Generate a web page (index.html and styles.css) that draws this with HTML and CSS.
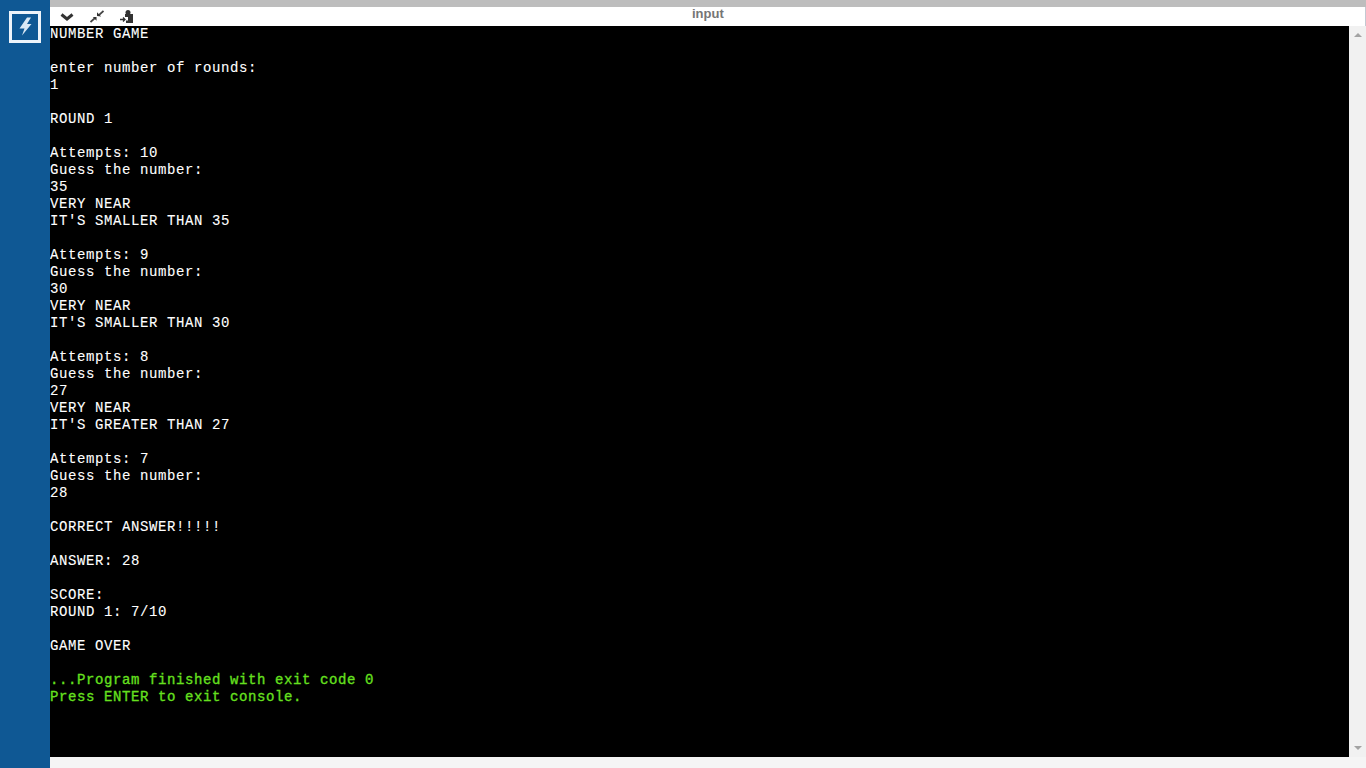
FILE: index.html
```html
<!DOCTYPE html>
<html lang="en">
<head>
<meta charset="utf-8">
<title>input</title>
<link rel="stylesheet" href="styles.css">
</head>
<body>
<aside class="rail">
  <div class="logo">
    <svg width="32" height="32" viewBox="0 0 32 32" aria-hidden="true">
      <rect x="1.5" y="1.5" width="29" height="29" fill="none" stroke="#eef4fa" stroke-width="3"/>
      <path d="M18 6.5 H22 L18 13 H22.5 L13 24.5 L15.5 17.5 H10.5 Z" fill="#d9e8f5"/>
    </svg>
  </div>
</aside>
<main class="main">
  <div class="topline"></div>
  <header class="toolbar">
    <div class="tools">
      <svg class="tool" width="14" height="8" viewBox="0 0 14 8" aria-hidden="true"><path d="M1.5 1.5 L7 6 L12.5 1.5" fill="none" stroke="#333" stroke-width="3"/></svg>
      <svg class="tool" width="14" height="13" viewBox="0 0 15 13" aria-hidden="true"><path d="M14.5 0.5 L9.5 5 M0.5 12.5 L5.5 8" stroke="#444" stroke-width="2"/><path d="M7.5 6 V2 L12 6.5 Z M7 7 H3 L7 11 Z" fill="#333"/></svg>
      <svg class="tool" width="14" height="13" viewBox="0 0 14 13" aria-hidden="true"><circle cx="8" cy="2.5" r="2.5" fill="#333"/><path d="M5 4 H13 V13 H6 V10.5 H8 V7 H5 Z" fill="#333"/><path d="M0 9.5 H4.5 M3 7.5 L5 9.5 L3 11.5" stroke="#333" stroke-width="1.3" fill="none"/></svg>
    </div>
    <div class="title">input</div>
  </header>
  <div class="console-row">
    <pre class="console">NUMBER GAME

enter number of rounds:
1

ROUND 1

Attempts: 10
Guess the number:
35
VERY NEAR
IT'S SMALLER THAN 35

Attempts: 9
Guess the number:
30
VERY NEAR
IT'S SMALLER THAN 30

Attempts: 8
Guess the number:
27
VERY NEAR
IT'S GREATER THAN 27

Attempts: 7
Guess the number:
28

CORRECT ANSWER!!!!!

ANSWER: 28

SCORE:
ROUND 1: 7/10

GAME OVER

<span class="done">...Program finished with exit code 0
Press ENTER to exit console.</span></pre>
    <div class="scrollbar">
      <span class="arrow up"></span>
      <span class="arrow down"></span>
    </div>
  </div>
  <div class="bottom"></div>
</main>
</body>
</html>
```
FILE: styles.css
```css
* { box-sizing: border-box; }
html, body { height: 100%; }
body {
  margin: 0;
  display: flex;
  height: 768px;
  overflow: hidden;
  background: #f5f5f5;
}
.rail {
  width: 50px;
  flex: none;
  background: #0f5894;
  padding: 11px 0 0 9px;
}
.logo { width: 32px; height: 32px; }
.logo svg { display: block; }
.main {
  flex: 1;
  display: flex;
  flex-direction: column;
  min-width: 0;
}
.topline { height: 7px; background: #bdbdbd; flex: none; }
.toolbar {
  height: 19px;
  flex: none;
  background: #fff;
  display: flex;
  align-items: center;
  position: relative;
  border-right: 1px solid #c3c9d2;
}
.tools {
  display: flex;
  align-items: center;
  gap: 16px;
  padding-left: 10px;
}
.tool { display: block; }
.title {
  position: absolute;
  left: 642px;
  top: 0;
  font: bold 13px/14px "Liberation Sans", Arial, sans-serif;
  color: #757575;
}
.console-row {
  height: 731px;
  flex: none;
  display: flex;
}
.console {
  flex: 1;
  margin: 0;
  background: #000;
  color: #fff;
  font: 14px/17px "Liberation Mono", "Courier New", monospace;
  letter-spacing: 0.6px;
  -webkit-text-stroke: 0.1px currentColor;
  overflow: hidden;
}
.done { color: #66e01f; -webkit-text-stroke-width: 0.3px; }
.scrollbar {
  width: 17px;
  flex: none;
  background: #f1f1f1;
  display: flex;
  flex-direction: column;
  justify-content: space-between;
  align-items: center;
  padding: 7px 0;
}
.arrow {
  width: 0;
  height: 0;
  border-left: 4px solid transparent;
  border-right: 4px solid transparent;
}
.arrow.up { border-bottom: 4px solid #a3a3a3; }
.arrow.down { border-top: 4px solid #a3a3a3; }
.bottom { flex: 1; background: #f5f5f5; }
```
